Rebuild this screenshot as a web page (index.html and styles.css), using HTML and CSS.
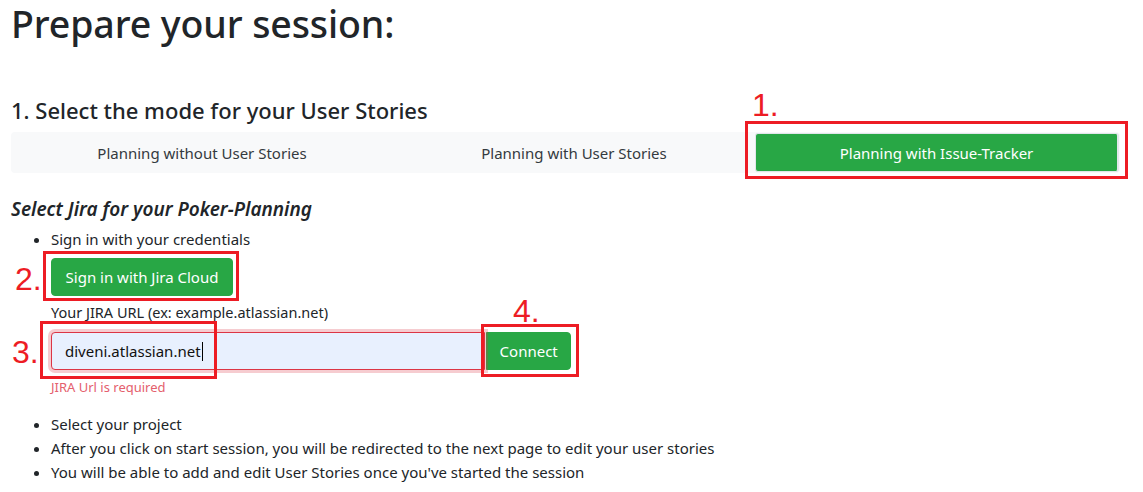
FILE: index.html
```html
<!DOCTYPE html>
<html lang="en">
<head>
<meta charset="utf-8">
<title>Prepare your session</title>
<link rel="stylesheet" href="styles.css">
</head>
<body>
<main class="page">
  <h1 class="title">Prepare your session:</h1>
  <h4 class="step">1. Select the mode for your User Stories</h4>
  <div class="modes">
    <button class="mode">Planning without User Stories</button>
    <button class="mode">Planning with User Stories</button>
    <button class="mode active">Planning with Issue-Tracker</button>
    <span class="mark mark-1">1.</span>
    <span class="box box-1"></span>
  </div>
  <h5 class="sub">Select Jira for your Poker-Planning</h5>
  <ul class="list">
    <li>Sign in with your credentials</li>
  </ul>
  <div class="indent signin">
    <button class="btn-green">Sign in with Jira Cloud</button>
    <span class="mark mark-2">2.</span>
    <span class="box box-2"></span>
  </div>
  <div class="indent field">
    <label class="label">Your JIRA URL (ex: example.atlassian.net)</label>
    <div class="group">
      <div class="input">diveni.atlassian.net<span class="caret"></span></div>
      <button class="btn-green connect">Connect</button>
      <span class="mark mark-3">3.</span>
      <span class="box box-3"></span>
      <span class="mark mark-4">4.</span>
      <span class="box box-4"></span>
    </div>
    <div class="error">JIRA Url is required</div>
  </div>
  <ul class="list bottom">
    <li>Select your project</li>
    <li>After you click on start session, you will be redirected to the next page to edit your user stories</li>
    <li>You will be able to add and edit User Stories once you've started the session</li>
  </ul>
</main>
</body>
</html>
```
FILE: styles.css
```css
* { box-sizing: border-box; }
html, body { margin: 0; background: #fff; }
body {
  font-family: "Noto Sans", "Open Sans", sans-serif;
  color: #212529;
  font-size: 15px;
  line-height: 24px;
}
.page { padding: 0 0 0 11px; width: 1128px; }
.title {
  margin: 0;
  font-size: 37.5px;
  font-weight: 500;
  line-height: 48px;
  padding-top: 0;
  letter-spacing: -0.1px;
}
.step {
  margin: 48px 0 8px;
  font-size: 22px;
  font-weight: 500;
  line-height: 28px;
}
.modes {
  position: relative;
  display: grid;
  grid-template-columns: 382px 362px 364px;
  background: #f8f9fa;
  border-radius: 4px;
  height: 41px;
  width: 1109px;
}
.mode {
  font: inherit;
  font-size: 15px;
  color: #343a40;
  background: transparent;
  border: 0;
  padding: 0;
}
.mode.active {
  background: #28a745;
  color: #fff;
  margin: 1px 0;
  border: 1px solid #e2e6ea;
  border-right-width: 2px;
  border-radius: 3px;
}
.sub {
  margin: 24px 0 0;
  font-size: 19px;
  font-style: italic;
  font-weight: 600;
  line-height: 24px;
}
.list { margin: 6px 0 0; padding-left: 40px; }
.indent { padding-left: 40px; position: relative; }
.signin { margin-top: 7px; height: 38px; }
.btn-green {
  font: inherit;
  font-size: 15px;
  background: #28a745;
  color: #fff;
  border: 1px solid #28a745;
  border-radius: 4px;
  height: 38px;
  padding: 0 11px;
}
.signin .btn-green { width: 182px; }
.field { margin-top: 4px; }
.label { display: block; font-size: 14.5px; line-height: 24px; }
.group {
  position: relative;
  display: flex;
  margin-top: 8px;
  width: 520px;
}
.input {
  width: 436px;
  height: 38px;
  background: #e8f0fe;
  border: 1px solid #dc3545;
  border-radius: 4px 0 0 4px;
  box-shadow: 0 0 0 3px rgba(220, 53, 69, 0.25);
  padding: 6px 12px 0 13px;
  font-size: 15px;
  line-height: 24px;
  color: #111;
  position: relative;
  z-index: 1;
}
.caret {
  display: inline-block;
  width: 1px;
  height: 19px;
  background: #000;
  vertical-align: -4px;
  margin-left: 1px;
}
.connect {
  width: 85px;
  border-radius: 0 4px 4px 0;
  padding: 0;
  margin-left: 1px;
}
.error {
  color: #e4606d;
  font-size: 13px;
  line-height: 18px;
  margin-top: 8px;
}
.bottom { margin-top: 16px; }
.mark {
  position: absolute;
  color: #ed1c24;
  font-family: "Liberation Sans", Arial, sans-serif;
  font-size: 32px;
  line-height: 32px;
  z-index: 3;
}
.box {
  position: absolute;
  border: 3px solid #ed1c24;
  z-index: 3;
}
.mark-1 { left: 741px; top: -43px; }
.box-1 { left: 734px; top: -11px; width: 383px; height: 58px; }
.mark-2 { left: 4px; top: 5px; }
.box-2 { left: 32px; top: -7px; width: 196px; height: 50px; }
.mark-3 { left: -39px; top: 4px; }
.box-3 { left: -11px; top: -11px; width: 177px; height: 58px; }
.mark-4 { left: 462px; top: -37px; }
.box-4 { left: 430px; top: -8px; width: 98px; height: 53px; }
```
